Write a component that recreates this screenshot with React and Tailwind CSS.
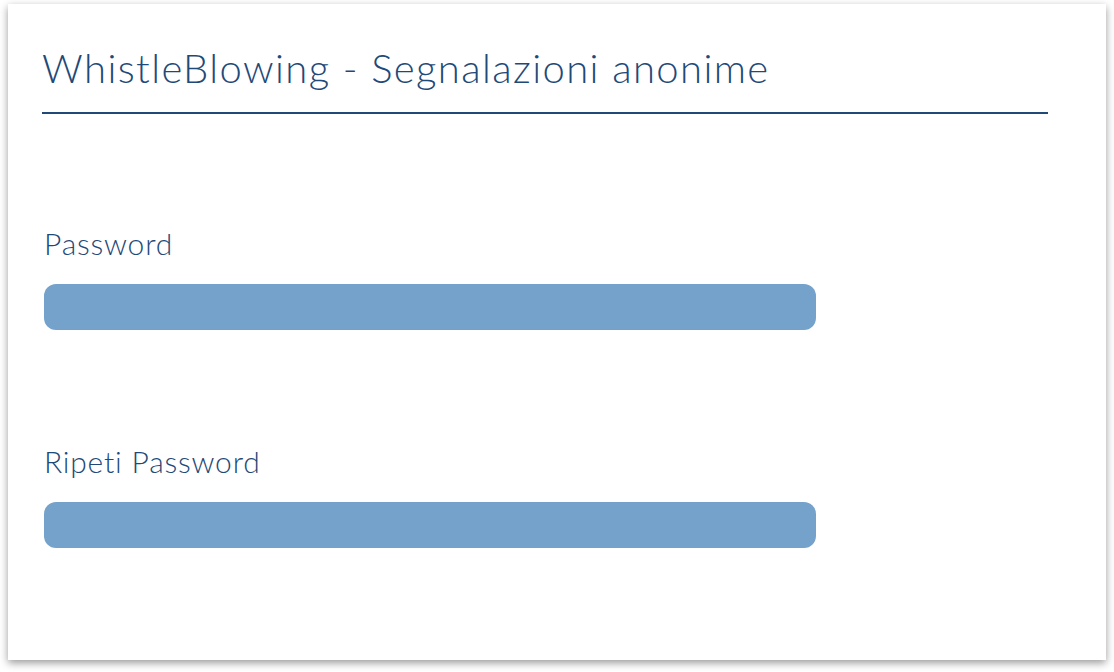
export default function App() {
  return (
    <div className="min-h-screen bg-white pl-2 pr-2 pt-1 pb-3 font-['Lato',sans-serif]">
      <div className="bg-white h-[656px] shadow-[0_3px_8px_rgba(0,0,0,0.4)] pl-[34px] pr-[58px] pt-[40px]">
        <h1 className="text-[40px] font-light leading-[48px] tracking-[1.4px] text-[#1f4a78]">
          WhistleBlowing - Segnalazioni anonime
        </h1>
        <div className="mt-[20px] h-[2px] bg-[#1f4a78]" />

        <div className="mt-[111px] pl-[2px]">
          <label className="block text-[30px] font-light leading-[36px] tracking-[0.8px] text-[#1f4a78]">Password</label>
          <div className="mt-[23px] w-[772px] h-[46px] rounded-xl bg-[#75a2cb]" />
        </div>

        <div className="mt-[113px] pl-[2px]">
          <label className="block text-[30px] font-light leading-[36px] tracking-[0.8px] text-[#1f4a78]">Ripeti Password</label>
          <div className="mt-[23px] w-[772px] h-[46px] rounded-xl bg-[#75a2cb]" />
        </div>
      </div>
    </div>
  )
}
